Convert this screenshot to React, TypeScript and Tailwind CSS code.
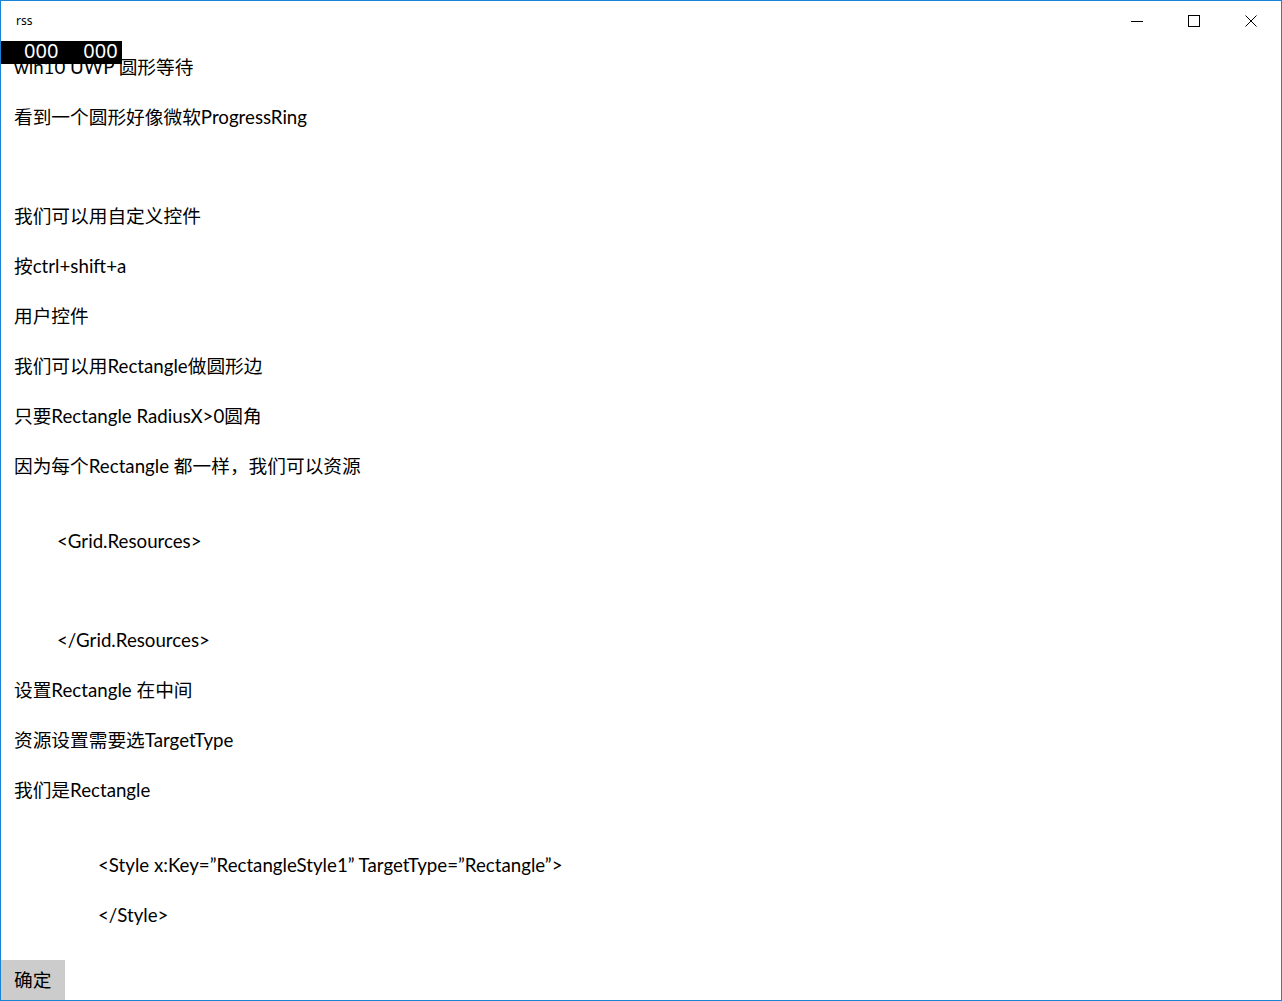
import React from 'react';

const lines: { text: string; mt: string; indent: string }[] = [
  { text: 'win10 UWP 圆形等待', mt: 'mt-[15px]', indent: 'pl-[13px]' },
  { text: '看到一个圆形好像微软ProgressRing', mt: 'mt-[25px]', indent: 'pl-[13px]' },
  { text: '我们可以用自定义控件', mt: 'mt-[74px]', indent: 'pl-[13px]' },
  { text: '按ctrl+shift+a', mt: 'mt-[25px]', indent: 'pl-[13px]' },
  { text: '用户控件', mt: 'mt-[25px]', indent: 'pl-[13px]' },
  { text: '我们可以用Rectangle做圆形边', mt: 'mt-[25px]', indent: 'pl-[13px]' },
  { text: '只要Rectangle RadiusX>0圆角', mt: 'mt-[25px]', indent: 'pl-[13px]' },
  { text: '因为每个Rectangle 都一样，我们可以资源', mt: 'mt-[25px]', indent: 'pl-[13px]' },
  { text: '<Grid.Resources>', mt: 'mt-[50px]', indent: 'pl-[56px]' },
  { text: '</Grid.Resources>', mt: 'mt-[74px]', indent: 'pl-[56px]' },
  { text: '设置Rectangle 在中间', mt: 'mt-[25px]', indent: 'pl-[13px]' },
  { text: '资源设置需要选TargetType', mt: 'mt-[25px]', indent: 'pl-[13px]' },
  { text: '我们是Rectangle', mt: 'mt-[25px]', indent: 'pl-[13px]' },
  { text: '<Style x:Key=”RectangleStyle1” TargetType=”Rectangle”>', mt: 'mt-[50px]', indent: 'pl-[97px]' },
  { text: '</Style>', mt: 'mt-[25px]', indent: 'pl-[97px]' },
];

export default function App() {
  return (
    <div
      className="relative w-[1282px] h-[1001px] border border-[#1883d7] bg-white flex flex-col text-black"
      style={{ fontFamily: 'Lato, "Noto Sans CJK SC", sans-serif' }}
    >
      {/* title bar */}
      <div className="h-[39px] flex items-center justify-between shrink-0">
        <span className="pl-[15px] text-[12px]" style={{ fontFamily: '"Noto Sans", sans-serif' }}>rss</span>
        <div className="flex h-full">
          <div className="w-[57px] flex items-center justify-center">
            <svg width="12" height="12" viewBox="0 0 12 12">
              <path d="M0 6.5h12" stroke="#000" strokeWidth="1" />
            </svg>
          </div>
          <div className="w-[57px] flex items-center justify-center">
            <svg width="12" height="12" viewBox="0 0 12 12">
              <rect x="0.5" y="0.5" width="11" height="11" fill="none" stroke="#000" strokeWidth="1" />
            </svg>
          </div>
          <div className="w-[57px] mr-[2px] flex items-center justify-center">
            <svg width="12" height="12" viewBox="0 0 12 12">
              <path d="M0.5 0.5l11 11M11.5 0.5l-11 11" stroke="#000" strokeWidth="1" />
            </svg>
          </div>
        </div>
      </div>

      {/* frame counter overlay */}
      <div
        className="absolute left-0 top-[40px] w-[121px] h-[23px] bg-black text-white text-[20px] leading-[20px] flex gap-[25px] pl-[23px]"
        style={{ fontFamily: '"Noto Sans", sans-serif' }}
      >
        <span>000</span>
        <span>000</span>
      </div>

      <div className="flex-1 text-[18.7px]">
        {lines.map((l, i) => (
          <div key={i} className={`${l.mt} ${l.indent} h-[25px] leading-[25px] whitespace-pre`}>
            {l.text}
          </div>
        ))}
      </div>

      <div className="shrink-0">
        <button className="w-[64px] h-[40px] bg-[#cccccc] text-[18.7px] text-left pl-[13px]">确定</button>
      </div>
    </div>
  );
}
